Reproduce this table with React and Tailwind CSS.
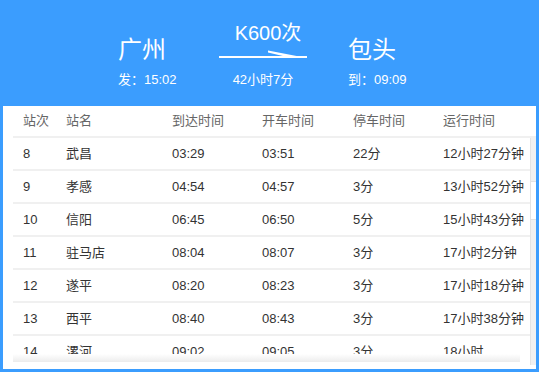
const rows = [
  { no: "8", name: "武昌", arrive: "03:29", depart: "03:51", stop: "22分", run: "12小时27分钟" },
  { no: "9", name: "孝感", arrive: "04:54", depart: "04:57", stop: "3分", run: "13小时52分钟" },
  { no: "10", name: "信阳", arrive: "06:45", depart: "06:50", stop: "5分", run: "15小时43分钟" },
  { no: "11", name: "驻马店", arrive: "08:04", depart: "08:07", stop: "3分", run: "17小时2分钟" },
  { no: "12", name: "遂平", arrive: "08:20", depart: "08:23", stop: "3分", run: "17小时18分钟" },
  { no: "13", name: "西平", arrive: "08:40", depart: "08:43", stop: "3分", run: "17小时38分钟" },
  { no: "14", name: "漯河", arrive: "09:02", depart: "09:05", stop: "3分", run: "18小时" },
];

const cols = "grid grid-cols-[43px_106px_90px_91px_90px_1fr] items-center pl-[10px]";

const App = () => {
  return (
    <div className="h-[377px] w-[541px] bg-white font-['Liberation_Sans','Noto_Sans_CJK_SC',sans-serif]">
      <div className="flex h-[372px] w-[539px] flex-col border-[3px] border-[#3b9dfe] bg-white">
        <header className="flex h-[103px] shrink-0 items-start bg-[#3b9dfe] pl-[115px] pt-[18px] text-white">
          <div className="mt-[17px] flex w-[101px] flex-col">
            <span className="text-[24px] leading-[24px]">广州</span>
            <span className="mt-[10px] text-[13px] leading-[16px]">发：15:02</span>
          </div>
          <div className="flex w-[88px] flex-col items-center">
            <span className="pl-[10px] text-[20px] leading-[24px]">K600次</span>
            <svg width="88" height="10" viewBox="0 0 88 10" className="mt-[5px]">
              <rect x="0" y="6" width="88" height="2" fill="#fff" />
              <polygon points="49,0.5 88,8 66,6.5 49,2.5" fill="#fff" />
            </svg>
            <span className="mt-[12px] text-[13px] leading-[16px]">42小时7分</span>
          </div>
          <div className="ml-[41px] mt-[17px] flex flex-col">
            <span className="text-[24px] leading-[24px]">包头</span>
            <span className="mt-[10px] text-[13px] leading-[16px]">到：09:09</span>
          </div>
        </header>

        <div className="flex flex-1 flex-col pl-[10px]">
          <div className={`${cols} h-[32px] border-b-2 border-[#f0f0f0] text-[13px] text-[#666]`}>
            <span>站次</span>
            <span>站名</span>
            <span>到达时间</span>
            <span>开车时间</span>
            <span>停车时间</span>
            <span>运行时间</span>
          </div>
          <div className="flex h-[227px]">
            <div className="relative h-[224px] flex-1 overflow-hidden">
              {rows.map((r) => (
                <div
                  key={r.no}
                  className={`${cols} h-[33px] border-b-2 border-[#f0f0f0] text-[13px] text-[#333]`}
                >
                  <span>{r.no}</span>
                  <span>{r.name}</span>
                  <span>{r.arrive}</span>
                  <span>{r.depart}</span>
                  <span>{r.stop}</span>
                  <span>{r.run}</span>
                </div>
              ))}
              <div className="absolute bottom-0 left-[-10px] h-[8px] w-[517px] bg-gradient-to-b from-white to-[#ececec]" />
            </div>
            <div className="flex w-[6px] flex-col border-l border-[#e3e3e3] bg-[#f1f1f1]">
              <div className="h-[43px]" />
              <div className="h-[39px] border-y border-[#e3e3e3] bg-white" />
            </div>
          </div>
        </div>
      </div>
    </div>
  );
};

export default App;
